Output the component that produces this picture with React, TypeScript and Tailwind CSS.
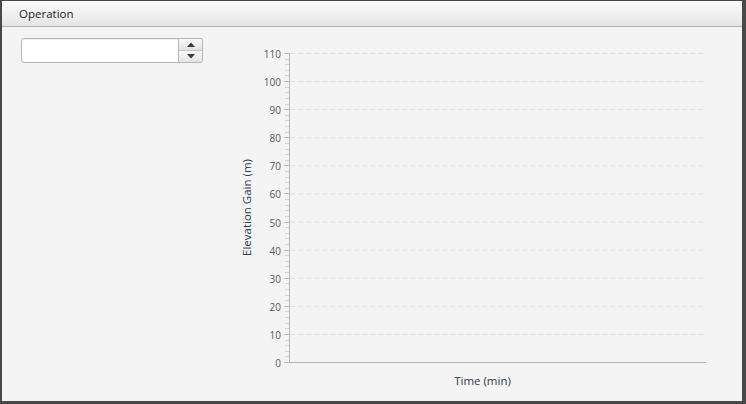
const MAJOR = [0, 10, 20, 30, 40, 50, 60, 70, 80, 90, 100, 110];
const MINOR = Array.from({ length: 56 }, (_, i) => i * 2).filter((v) => v % 10 !== 0);

// svg coords: 0 at y=322, 110 at y=13
const yOf = (v: number) => 322 - (v * 309) / 110;

function Spinner() {
  return (
    <div className="flex w-[182px] h-[25px]">
      <div className="flex-1 bg-white border border-[#b5b5b5] rounded-l-[3px] shadow-[inset_0_1px_1px_rgba(0,0,0,0.06)]" />
      <div className="flex flex-col w-[24px] border border-l-0 border-[#b5b5b5] rounded-r-[3px] overflow-hidden">
        <div className="flex-1 flex items-center justify-center bg-gradient-to-b from-[#f9f9f9] to-[#e3e3e3] border-b border-[#c4c4c4]">
          <svg width="8" height="5" viewBox="0 0 8 5">
            <path d="M0 5 L4 0.5 L8 5 Z" fill="#3a3a3a" />
          </svg>
        </div>
        <div className="flex-1 flex items-center justify-center bg-gradient-to-b from-[#f9f9f9] to-[#e3e3e3]">
          <svg width="8" height="5" viewBox="0 0 8 5">
            <path d="M0 0 L8 0 L4 4.5 Z" fill="#3a3a3a" />
          </svg>
        </div>
      </div>
    </div>
  );
}

function Chart() {
  return (
    <svg width="490" height="352" viewBox="0 0 490 352" style={{ fontFamily: '"Open Sans", sans-serif' }}>
      {MAJOR.filter((v) => v > 0).map((v) => (
        <line key={`g${v}`} x1="60" x2="476" y1={yOf(v) + 0.5} y2={yOf(v) + 0.5} stroke="#dedede" strokeDasharray="5 3" />
      ))}
      {MINOR.map((v) => (
        <line key={`m${v}`} x1="55" x2="59" y1={Math.round(yOf(v)) + 0.5} y2={Math.round(yOf(v)) + 0.5} stroke="#d2d2d2" />
      ))}
      {MAJOR.map((v) => (
        <g key={`t${v}`}>
          <line x1="54" x2="59.5" y1={Math.round(yOf(v)) + 0.5} y2={Math.round(yOf(v)) + 0.5} stroke="#b9b9b9" />
          <text x="51" y={Math.round(yOf(v)) + 0.5} textAnchor="end" dominantBaseline="central" fontSize="10" fill="#565656">
            {v}
          </text>
        </g>
      ))}
      <line x1="59.5" x2="59.5" y1="13" y2="322.5" stroke="#b9b9b9" />
      <line x1="59.5" x2="476" y1="322.5" y2="322.5" stroke="#b4b4b4" />
      <text
        transform="translate(16.5 167.5) rotate(-90)"
        textAnchor="middle"
        dominantBaseline="central"
        fontSize="11.5"
        fill="#2e3a4c"
      >
        Elevation Gain (m)
      </text>
      <text x="252.5" y="340" textAnchor="middle" dominantBaseline="central" fontSize="11.5" fill="#2e3a4c">
        Time (min)
      </text>
    </svg>
  );
}

export default function App() {
  return (
    <div
      className="w-[746px] h-[404px] border-solid border-t-[1px] border-l-[2px] border-r-[4px] border-b-[3px] border-[#484848]"
      style={{ fontFamily: '"Open Sans", sans-serif' }}
    >
      <div className="flex flex-col h-full bg-[#f4f4f4]">
        <div className="h-[26px] flex items-center pl-[17px] bg-gradient-to-b from-[#fbfbfb] to-[#e5e5e5] border-b border-[#b3b3b3]">
          <span className="text-[11.5px] text-[#222]">Operation</span>
        </div>
        <div className="flex-1 flex">
          <div className="w-[228px] pl-[19px] pt-[11px]">
            <Spinner />
          </div>
          <div className="pt-[13px]">
            <Chart />
          </div>
        </div>
      </div>
    </div>
  );
}
